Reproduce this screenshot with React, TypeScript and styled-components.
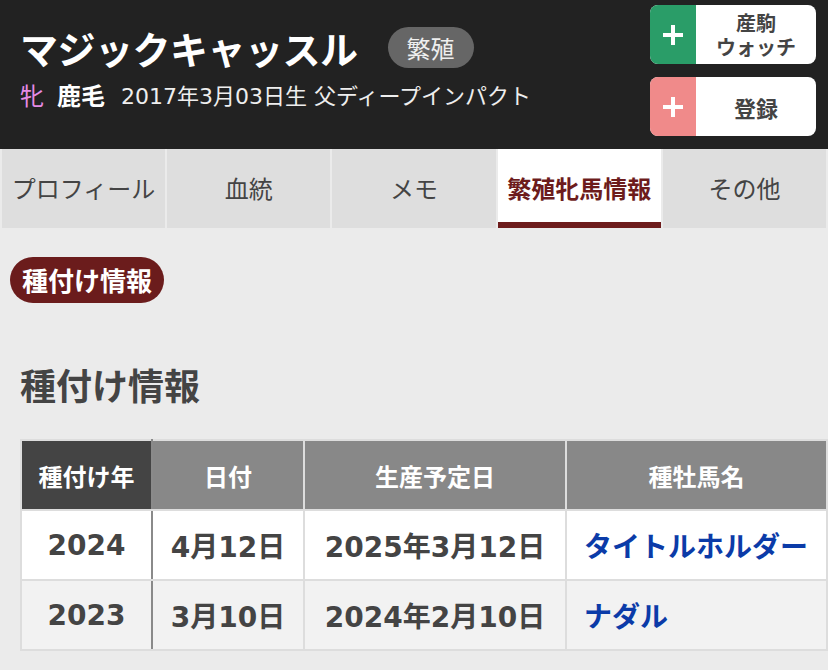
import React, { ReactElement } from 'react'
import styled, { createGlobalStyle } from 'styled-components'

const GlobalStyle = createGlobalStyle`
  body {
    margin: 0;
    background: #ebebeb;
    font-family: 'DejaVu Sans', 'Noto Sans CJK JP', sans-serif;
    color: #444;
  }
`

const Header = styled.header`
  display: flex;
  justify-content: space-between;
  height: 149px;
  padding: 0 12px 0 20px;
  box-sizing: border-box;
  background: #222;
`

const Info = styled.div`
  display: flex;
  flex-direction: column;
  gap: 8px;
  padding-top: 24px;
`

const TitleRow = styled.div`
  display: flex;
  align-items: center;
  gap: 30px;
  height: 47px;
`

const Title = styled.h1`
  margin: 0;
  font-family: 'Noto Sans CJK JP', sans-serif;
  font-size: 38px;
  font-weight: 700;
  line-height: 47px;
  color: #fff;
  letter-spacing: -0.5px;
`

const Badge = styled.span`
  height: 41px;
  padding: 0 19px;
  border-radius: 21px;
  background: #666;
  color: #eee;
  font-family: 'Noto Sans CJK JP', sans-serif;
  font-size: 24px;
  line-height: 41px;
`

const SubRow = styled.div`
  display: flex;
  align-items: center;
  height: 30px;
`

const Sex = styled.span`
  font-family: 'Noto Sans CJK JP', sans-serif;
  font-size: 24px;
  color: #e68be6;
  margin-right: 13px;
`

const Coat = styled.span`
  font-family: 'Noto Sans CJK JP', sans-serif;
  font-size: 24px;
  font-weight: 700;
  color: #fff;
  margin-right: 16px;
`

const Birth = styled.span`
  font-size: 22px;
  color: #eee;
`

const Actions = styled.div`
  display: flex;
  flex-direction: column;
  gap: 13px;
  padding-top: 5px;
`

const ActionButton = styled.button`
  display: flex;
  width: 166px;
  height: 59px;
  padding: 0;
  border: none;
  border-radius: 8px;
  overflow: hidden;
  background: #fff;
  cursor: pointer;
`

const PlusBox = styled.span<{ $color: string }>`
  display: flex;
  align-items: center;
  justify-content: center;
  width: 46px;
  height: 100%;
  background: ${p => p.$color};
`

const ActionLabel = styled.span<{ $size: number }>`
  flex: 1;
  display: flex;
  flex-direction: column;
  align-items: center;
  justify-content: center;
  font-family: 'Noto Sans CJK JP', sans-serif;
  font-size: ${p => p.$size}px;
  font-weight: 700;
  color: #444;
  text-align: center;
`

const LabelLine = styled.span`
  display: block;
  height: 24px;
  line-height: 24px;
  overflow: visible;
`

const Tabs = styled.nav`
  display: flex;
  gap: 2px;
  padding: 0 2px;
`

const Tab = styled.div<{ $active?: boolean }>`
  flex: 1;
  height: 79px;
  display: flex;
  align-items: center;
  justify-content: center;
  box-sizing: border-box;
  background: ${p => (p.$active ? '#fff' : '#dedede')};
  border-bottom: 6px solid ${p => (p.$active ? '#6d1c1c' : '#dedede')};
  padding-top: 3px;
  font-family: 'Noto Sans CJK JP', sans-serif;
  font-size: 24px;
  font-weight: ${p => (p.$active ? 700 : 400)};
  color: ${p => (p.$active ? '#6d1c1c' : '#444')};
`

const Content = styled.main`
  padding: 29px 2px 20px 10px;
`

const SectionPill = styled.div`
  display: inline-block;
  height: 46px;
  padding: 0 12px;
  border-radius: 23px;
  background: #6b1c1c;
  color: #fff;
  font-family: 'Noto Sans CJK JP', sans-serif;
  font-size: 26px;
  font-weight: 700;
  line-height: 46px;
`

const Heading = styled.h2`
  margin: 56px 0 0 10px;
  font-family: 'Noto Sans CJK JP', sans-serif;
  font-size: 36px;
  font-weight: 700;
  line-height: 50px;
  color: #444;
`

const Table = styled.table`
  margin: 30px 0 0 10px;
  width: 808px;
  table-layout: fixed;
  border-collapse: collapse;
  border: 2px solid #dddddd;

  & th,
  & td {
    border: 2px solid #dddddd;
    padding: 0;
    text-align: center;
  }

  & th {
    height: 68px;
    background: #888;
    color: #fff;
    font-family: 'Noto Sans CJK JP', sans-serif;
    font-size: 24px;
    font-weight: 700;
  }

  & th:first-child {
    background: #444;
  }

  & th:first-child,
  & td:first-child {
    border-right-color: #8a8a8a;
  }

  & td {
    height: 68px;
    font-size: 28px;
    font-weight: 700;
    color: #444;
  }

  & tbody tr:nth-child(1) td {
    background: #fff;
  }

  & tbody tr:nth-child(2) td {
    background: #f2f2f2;
  }

  & td:last-child {
    text-align: left;
    padding-left: 17px;
  }
`

const SireLink = styled.a`
  font-family: 'Noto Sans CJK JP', sans-serif;
  color: #0b3ba8;
  text-decoration: none;
`

const Plus = (): ReactElement => (
  <svg width='20' height='20' viewBox='0 0 20 20'>
    <path d='M10 0v20M0 10h20' stroke='#fff' strokeWidth='4' />
  </svg>
)

const tabs = ['プロフィール', '血統', 'メモ', '繁殖牝馬情報', 'その他']

const rows = [
  { year: '2024', date: '4月12日', due: '2025年3月12日', sire: 'タイトルホルダー' },
  { year: '2023', date: '3月10日', due: '2024年2月10日', sire: 'ナダル' },
]

const App = (): ReactElement => (
  <>
    <GlobalStyle />
    <Header>
      <Info>
        <TitleRow>
          <Title>マジックキャッスル</Title>
          <Badge>繁殖</Badge>
        </TitleRow>
        <SubRow>
          <Sex>牝</Sex>
          <Coat>鹿毛</Coat>
          <Birth>2017年3月03日生 父ディープインパクト</Birth>
        </SubRow>
      </Info>
      <Actions>
        <ActionButton>
          <PlusBox $color='#2a9d68'>
            <Plus />
          </PlusBox>
          <ActionLabel $size={20}>
            <LabelLine>産駒</LabelLine>
            <LabelLine>ウォッチ</LabelLine>
          </ActionLabel>
        </ActionButton>
        <ActionButton>
          <PlusBox $color='#f08a8a'>
            <Plus />
          </PlusBox>
          <ActionLabel $size={22}>登録</ActionLabel>
        </ActionButton>
      </Actions>
    </Header>
    <Tabs>
      {tabs.map(tab => (
        <Tab key={tab} $active={tab === '繁殖牝馬情報'}>
          {tab}
        </Tab>
      ))}
    </Tabs>
    <Content>
      <SectionPill>種付け情報</SectionPill>
      <Heading>種付け情報</Heading>
      <Table>
        <colgroup>
          <col style={{ width: 131 }} />
          <col style={{ width: 152 }} />
          <col style={{ width: 262 }} />
          <col />
        </colgroup>
        <thead>
          <tr>
            <th>種付け年</th>
            <th>日付</th>
            <th>生産予定日</th>
            <th>種牡馬名</th>
          </tr>
        </thead>
        <tbody>
          {rows.map(row => (
            <tr key={row.year}>
              <td>{row.year}</td>
              <td>{row.date}</td>
              <td>{row.due}</td>
              <td>
                <SireLink href='#'>{row.sire}</SireLink>
              </td>
            </tr>
          ))}
        </tbody>
      </Table>
    </Content>
  </>
)

export default App
